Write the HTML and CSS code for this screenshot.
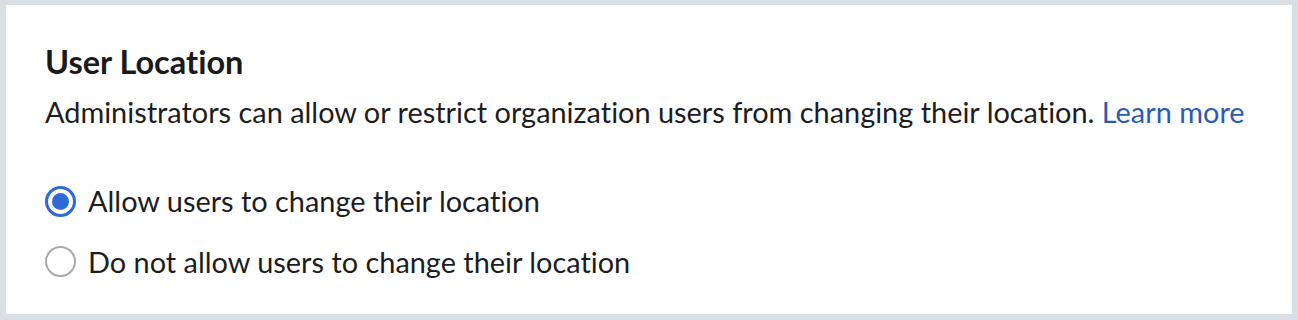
FILE: index.html
```html
<!DOCTYPE html>
<html>
<head>
<meta charset="utf-8">
<link rel="stylesheet" href="styles.css">
</head>
<body>
<div class="frame">
  <section class="card">
    <h2 class="title">User Location</h2>
    <p class="desc">Administrators can allow or restrict organization users from changing their location. <a class="link" href="#">Learn more</a></p>
    <div class="options">
      <label class="option">
        <span class="radio checked"><span class="dot"></span></span>
        <span class="label">Allow users to change their location</span>
      </label>
      <label class="option">
        <span class="radio"></span>
        <span class="label">Do not allow users to change their location</span>
      </label>
    </div>
  </section>
</div>
</body>
</html>
```

FILE: styles.css
```css
html, body {
  margin: 0;
  padding: 0;
  background: #d9e0e5;
}
body {
  font-family: Lato, "Open Sans", sans-serif;
  color: #1d1d1f;
  font-variant-ligatures: no-common-ligatures;
  font-feature-settings: "liga" 0;
}
.frame {
  width: 1298px;
  height: 320px;
  box-sizing: border-box;
  padding: 5px 6px 6px 6px;
  background: #d9e0e5;
}
.card {
  background: #ffffff;
  height: 100%;
  box-sizing: border-box;
  padding: 37px 39px 0 39px;
}
.title {
  margin: 0;
  font-size: 32.5px;
  font-weight: 700;
  line-height: 40px;
  color: #1a1a1a;
}
.desc {
  margin: 12px 0 0 0;
  font-size: 28.9px;
  line-height: 36px;
  color: #1d1d1f;
}
.link {
  color: #2b5cb5;
  text-decoration: none;
}
.options {
  display: flex;
  flex-direction: column;
  gap: 24.5px;
  margin-top: 53px;
}
.option {
  display: flex;
  align-items: center;
  gap: 12px;
  font-size: 28.9px;
  line-height: 36px;
}
.radio {
  width: 31px;
  height: 31px;
  box-sizing: border-box;
  border-radius: 50%;
  border: 2.5px solid #a9a9a9;
  display: flex;
  align-items: center;
  justify-content: center;
  flex: none;
}
.radio.checked {
  border: 3px solid #2f6ad9;
}
.dot {
  width: 17px;
  height: 17px;
  border-radius: 50%;
  background: #2f6ad9;
}
```
